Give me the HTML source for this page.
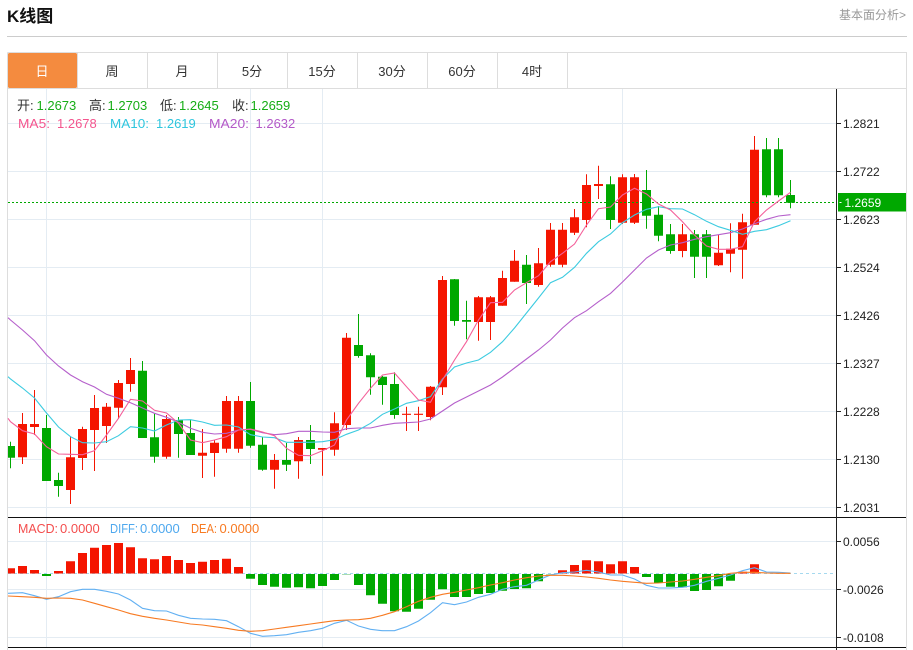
<!DOCTYPE html>
<html lang="zh">
<head>
<meta charset="utf-8">
<title>K线图</title>
<style>
html,body{margin:0;padding:0;background:#fff;width:913px;height:650px;overflow:hidden}
svg{display:block;position:absolute;left:0;top:0}
text{font-family:"Liberation Sans","Noto Sans CJK SC",sans-serif}
.tab{font-size:13px;fill:#333;text-anchor:middle}
.ax{font-size:12px;fill:#222}
.lg{font-size:13px}
</style>
</head>
<body>
<svg width="913" height="650" viewBox="0 0 913 650" xmlns="http://www.w3.org/2000/svg">
<!-- header -->
<text x="7" y="22" font-size="17" font-weight="700" fill="#111">K线图</text>
<text x="839" y="19" font-size="12" fill="#999">基本面分析&gt;</text>
<path d="M7 36.5H907" stroke="#ccc" fill="none"/>
<!-- frame -->
<path d="M7.5 52.5H906.5V650M7.5 52.5V650M7.5 88.5H906.5" stroke="#ddd" fill="none"/>
<!-- tabs -->
<rect x="8" y="53" width="69" height="35" rx="1.5" fill="#f48b3f"/>
<path d="M77.5 53V88M147.5 53V88M217.5 53V88M287.5 53V88M357.5 53V88M427.5 53V88M497.5 53V88M567.5 53V88" stroke="#ddd" fill="none"/>
<text class="tab" x="42" y="76" style="fill:#fff">日</text>
<text class="tab" x="112" y="76">周</text>
<text class="tab" x="182" y="76">月</text>
<text class="tab" x="252" y="76">5分</text>
<text class="tab" x="322" y="76">15分</text>
<text class="tab" x="392" y="76">30分</text>
<text class="tab" x="462" y="76">60分</text>
<text class="tab" x="532" y="76">4时</text>
<!-- grid -->
<path d="M8 123.5H836M8 171.5H836M8 219.5H836M8 267.5H836M8 315.5H836M8 363.5H836M8 411.5H836M8 459.5H836M8 507.5H836M8 541.5H836M8 589.5H836M8 637.5H836M46.5 89V647M250.5 89V647M322.5 89V647M622.5 89V647" stroke="#e4ecf3" fill="none"/>
<!-- green candles -->
<path fill="none" stroke="#00a800" d="M10.5 441.7V468.3M46.5 415V481M58.5 472.7V496.7M142.5 361V438M154.5 413V462.7M178.5 417V457.7M190.5 420V455M250.5 382V447.7M262.5 436.7V470.7M286.5 443V471M310.5 425V464M358.5 314V357.7M370.5 353.3V394.7M382.5 376V404.7M394.5 372.3V418.7M454.5 279V325.7M466.5 300.7V339.3M526.5 255V304M610.5 176.3V229M646.5 170V228.7M658.5 206V241.3M670.5 224V253.7M694.5 230V278M706.5 230V278M766.5 138V197.3M778.5 138V197.3M790.5 180V208.3"/>
<path fill="#00a800" d="M8 446h7V457.7h-7zM42 428h9V481h-9zM54 480h9V486h-9zM138 370.7h9V438h-9zM150 437.3h9V456.7h-9zM174 420h9V434h-9zM186 433h9V455h-9zM246 401h9V445.7h-9zM258 444.7h9V469.7h-9zM282 460h9V464.7h-9zM306 440h9V449h-9zM354 345h9V356h-9zM366 355.3h9V377.3h-9zM378 376.7h9V385h-9zM390 384h9V415h-9zM450 279.3h9V321h-9zM462 320h9V321.7h-9zM522 264.7h9V283h-9zM606 184.3h9V220h-9zM642 190h9V215.7h-9zM654 214.7h9V235.7h-9zM666 234.3h9V251h-9zM690 234.3h9V256.7h-9zM702 234.3h9V256.7h-9zM762 149.3h9V195.3h-9zM774 149.3h9V195.3h-9zM786 195h9V202.7h-9z"/>
<!-- red candles -->
<path fill="none" stroke="#f41500" d="M22.5 413V464M34.5 390V435M70.5 436V504M82.5 426.7V470M94.5 395V471M106.5 403V443M118.5 380V419M130.5 358V391.7M166.5 415V458.7M202.5 429V478M214.5 440V476.7M226.5 396V452.7M238.5 396V452.7M274.5 454V488.7M298.5 437V478.7M322.5 448V475.7M334.5 412.3V455.7M346.5 333V430M406.5 406.7V431M418.5 406.7V431M430.5 386V420.3M442.5 276V395M478.5 296V340.7M490.5 296V340M502.5 270.7V305.7M514.5 250V281.7M538.5 248V286.7M550.5 223V266.7M562.5 223V267.3M574.5 209V235M586.5 174.3V227.3M598.5 165.7V199M622.5 174.3V224M634.5 174V224M682.5 224V257.3M718.5 235V266M730.5 223.3V272.3M742.5 213.7V278.7M754.5 136V224.7"/>
<path fill="#f41500" d="M18 424h9V457.3h-9zM30 424h9V427h-9zM66 457.3h9V490h-9zM78 429h9V458h-9zM90 408h9V430h-9zM102 406.7h9V426h-9zM114 383h9V407.7h-9zM126 370h9V384h-9zM162 419h9V456.7h-9zM198 452.7h9V455.7h-9zM210 442.7h9V453h-9zM222 401h9V448.7h-9zM234 401h9V448.7h-9zM270 460h9V469.7h-9zM294 440h9V461.3h-9zM318 448h9V449.7h-9zM330 423.3h9V449.7h-9zM342 337.7h9V425h-9zM402 413.7h9V414.9h-9zM414 413.7h9V414.9h-9zM426 386.7h9V417h-9zM438 280h9V387.3h-9zM474 297.3h9V322h-9zM486 297.3h9V322h-9zM498 278h9V305.7h-9zM510 260.7h9V281.7h-9zM534 263.3h9V285h-9zM546 229.7h9V264.7h-9zM558 229.7h9V264.7h-9zM570 217.3h9V232.7h-9zM582 185h9V220h-9zM594 184h9V186h-9zM618 177.3h9V222.7h-9zM630 177.3h9V222.7h-9zM678 234.3h9V251h-9zM714 252.7h9V265.3h-9zM726 248.7h9V253.7h-9zM738 222.3h9V249.7h-9zM750 149.7h9V224.7h-9z"/>
<!-- price line -->
<path d="M8 202.5H836" stroke="#00a800" stroke-dasharray="2 2" fill="none"/>
<!-- MA20 -->
<polyline fill="none" stroke="#b55fcb" stroke-width="1.1" points="8,317.7 10.5,320 22.5,330 34.5,340.7 46.5,355 58.5,366 70.5,375 82.5,381.7 94.5,387 106.5,394.3 118.5,398.3 130.5,402.7 142.5,408 154.5,413.3 166.5,417.3 178.5,422.3 190.5,428.3 202.5,432.3 214.5,434 226.5,433.3 238.5,430 250.5,429.3 262.5,432.7 274.5,434.7 286.5,433.7 298.5,431.3 310.5,431.3 322.5,432 334.5,432.3 346.5,428.7 358.5,428 370.5,428 382.5,425.3 394.5,423.3 406.5,422.7 418.5,422 430.5,419 442.5,411 454.5,403 466.5,397 478.5,391 490.5,385 502.5,377 514.5,368 526.5,359 538.5,350 550.5,340 562.5,328 574.5,317.7 586.5,310.7 598.5,301.7 610.5,293.4 622.5,282 634.5,270 646.5,258 658.5,250 670.5,245 682.5,242.7 694.5,239.3 706.5,236.7 718.5,234.7 730.5,232.7 742.5,229 754.5,223.7 766.5,219.3 778.5,216 790.5,214.7"/>
<!-- MA10 -->
<polyline fill="none" stroke="#3ccbe0" stroke-width="1.1" points="8,376.7 10.5,379 22.5,388 34.5,398 46.5,413 58.5,427 70.5,436.7 82.5,442.7 94.5,443 106.5,441.7 118.5,435.7 130.5,426.7 142.5,428 154.5,431 166.5,425 178.5,420 190.5,419.7 202.5,422 214.5,425.3 226.5,425 238.5,427 250.5,434.7 262.5,437 274.5,437.7 286.5,442.3 298.5,442.3 310.5,442.3 322.5,441.7 334.5,439.7 346.5,434.3 358.5,430 370.5,423.3 382.5,414.3 394.5,409 406.5,403.3 418.5,400.7 430.5,396.7 442.5,379 454.5,367 466.5,363 478.5,360 490.5,352.3 502.5,341.7 514.5,328 526.5,313 538.5,298 550.5,282.7 562.5,277.3 574.5,267.3 586.5,253.3 598.5,241.7 610.5,234 622.5,222.7 634.5,215 646.5,209.3 658.5,206.7 670.5,208.7 682.5,209 694.5,214.7 706.5,221.3 718.5,226.7 730.5,230.3 742.5,234.3 754.5,231.3 766.5,229.7 778.5,225.7 790.5,220.7"/>
<!-- MA5 -->
<polyline fill="none" stroke="#f4609a" stroke-width="1.1" points="8,418.3 10.5,421.7 22.5,430.7 34.5,434 46.5,446.7 58.5,454 70.5,454.3 82.5,454.7 94.5,450.7 106.5,435 118.5,418.3 130.5,399.3 142.5,401 154.5,410.3 166.5,413 178.5,423.3 190.5,440 202.5,442.7 214.5,440 226.5,436.7 238.5,430 250.5,429 262.5,432 274.5,435.7 286.5,448.3 298.5,455.3 310.5,455.7 322.5,450.7 334.5,445 346.5,420 358.5,403.3 370.5,388.3 382.5,375 394.5,373 406.5,386.7 418.5,400 430.5,402.3 442.5,380 454.5,360 466.5,341.7 478.5,320 490.5,302.7 502.5,302.3 514.5,290 526.5,282.7 538.5,275.7 550.5,261.7 562.5,253.3 574.5,244 586.5,225 598.5,208.7 610.5,207 622.5,195 634.5,188.3 646.5,194 658.5,204 670.5,210 682.5,221.7 694.5,235 706.5,246 718.5,249.3 730.5,249.3 742.5,246.7 754.5,221.7 766.5,210 778.5,201 790.5,192.3"/>
<!-- MACD zero -->
<path d="M8 573.5H833" stroke="#a5d9ef" stroke-dasharray="3 3" fill="none"/>
<!-- MACD bars -->
<path fill="#f41500" d="M8 568.3h7V573.5h-7zM18 566h9V573.5h-9zM30 570h9V573.5h-9zM54 571h9V573.5h-9zM66 561.3h9V573.5h-9zM78 553h9V573.5h-9zM90 547.7h9V573.5h-9zM102 545h9V573.5h-9zM114 543h9V573.5h-9zM126 547.3h9V573.5h-9zM138 558.3h9V573.5h-9zM150 559.3h9V573.5h-9zM162 556h9V573.5h-9zM174 560h9V573.5h-9zM186 563h9V573.5h-9zM198 561.7h9V573.5h-9zM210 560h9V573.5h-9zM222 558.7h9V573.5h-9zM234 567h9V573.5h-9zM558 570.3h9V573.5h-9zM570 565h9V573.5h-9zM582 560.3h9V573.5h-9zM594 561.3h9V573.5h-9zM606 564.3h9V573.5h-9zM618 561.3h9V573.5h-9zM630 567h9V573.5h-9zM738 571.7h9V573.5h-9zM750 564.3h9V573.5h-9z"/>
<path fill="#00a800" d="M42 574h9V576h-9zM246 574h9V578.7h-9zM258 574h9V585h-9zM270 574h9V586.7h-9zM282 574h9V587.7h-9zM294 574h9V587.3h-9zM306 574h9V588.3h-9zM318 574h9V586h-9zM330 574h9V580h-9zM354 574h9V585h-9zM366 574h9V595.3h-9zM378 574h9V603.7h-9zM390 574h9V611.3h-9zM402 574h9V611.7h-9zM414 574h9V608.7h-9zM426 574h9V599.7h-9zM438 574h9V589.3h-9zM450 574h9V597h-9zM462 574h9V597h-9zM474 574h9V594h-9zM486 574h9V593h-9zM498 574h9V590.7h-9zM510 574h9V589h-9zM522 574h9V588.3h-9zM534 574h9V581.3h-9zM642 574h9V577h-9zM654 574h9V583h-9zM666 574h9V586.7h-9zM678 574h9V587.3h-9zM690 574h9V591h-9zM702 574h9V590h-9zM714 574h9V586.3h-9zM726 574h9V580.7h-9z"/>
<path fill="#a8dcb0" d="M342 574h9V575h-9zM546 574h9V575h-9z"/>
<!-- DIFF -->
<polyline fill="none" stroke="#62b0f2" stroke-width="1.1" points="8,593.3 22.5,592.7 34.5,595.7 46.5,599.3 58.5,596.7 70.5,591.7 82.5,589.3 94.5,589.3 106.5,591.3 118.5,594 130.5,600 142.5,608.3 154.5,610.7 166.5,611 178.5,615.3 190.5,618.3 202.5,619 214.5,619.3 226.5,620.7 238.5,626.7 250.5,633.3 262.5,636.3 274.5,635.7 286.5,634.7 298.5,632.3 310.5,630.7 322.5,628.3 334.5,623.3 346.5,620.3 358.5,626 370.5,629.3 382.5,630.7 394.5,630.7 406.5,626.7 418.5,621 430.5,612.7 442.5,602.7 454.5,604.7 466.5,602 478.5,597.3 490.5,594.3 502.5,589.3 514.5,586.7 526.5,585.3 538.5,580 550.5,575 562.5,572.7 574.5,572 586.5,570.3 598.5,572 610.5,575 622.5,575 634.5,579 646.5,585.3 658.5,588 670.5,588 682.5,587.3 694.5,585.3 706.5,581.3 718.5,578.3 730.5,575 742.5,570.7 754.5,567.7 766.5,572 778.5,572.3 790.5,573"/>
<!-- DEA -->
<polyline fill="none" stroke="#f77a22" stroke-width="1.1" points="8,596 22.5,596.7 34.5,597.3 46.5,598.3 58.5,598 70.5,598.3 82.5,600 94.5,603.3 106.5,606.7 118.5,610 130.5,613.7 142.5,616.3 154.5,618.3 166.5,620 178.5,622 190.5,624 202.5,625 214.5,626.7 226.5,628.3 238.5,630.3 250.5,631.3 262.5,630.7 274.5,629 286.5,627.3 298.5,625.7 310.5,624 322.5,622.3 334.5,620.7 346.5,620 358.5,619.7 370.5,618.3 382.5,615.3 394.5,611.7 406.5,606.7 418.5,601.3 430.5,597.3 442.5,594.3 454.5,592.3 466.5,590 478.5,587.7 490.5,585 502.5,582.7 514.5,580 526.5,577.7 538.5,576 550.5,575.3 562.5,575.3 574.5,576 586.5,577 598.5,578.3 610.5,580 622.5,581.3 634.5,582.3 646.5,583.3 658.5,583 670.5,582 682.5,581 694.5,579.3 706.5,577.3 718.5,575.7 730.5,573.3 742.5,572.3 754.5,572.3 766.5,573 778.5,573.3 790.5,573.3"/>
<!-- axes -->
<path d="M8 517.5H906M8 647.5H906" stroke="#111" fill="none"/>
<path d="M836.5 89V650M836 123.5H841M836 171.5H841M836 219.5H841M836 267.5H841M836 315.5H841M836 363.5H841M836 411.5H841M836 459.5H841M836 507.5H841M836 541.5H841M836 589.5H841M836 637.5H841" stroke="#222" fill="none"/>
<text class="ax" x="843" y="128">1.2821</text>
<text class="ax" x="843" y="176">1.2722</text>
<text class="ax" x="843" y="224">1.2623</text>
<text class="ax" x="843" y="272">1.2524</text>
<text class="ax" x="843" y="320">1.2426</text>
<text class="ax" x="843" y="368">1.2327</text>
<text class="ax" x="843" y="416">1.2228</text>
<text class="ax" x="843" y="464">1.2130</text>
<text class="ax" x="843" y="512">1.2031</text>
<text class="ax" x="843" y="546">0.0056</text>
<text class="ax" x="843" y="594">-0.0026</text>
<text class="ax" x="843" y="642">-0.0108</text>
<!-- current price -->
<rect x="838" y="193" width="68" height="18.5" fill="#00a800"/>
<path d="M839.5 202.5H841.5" stroke="#fff" fill="none"/>
<text x="844.5" y="207" font-size="12" fill="#fff">1.2659</text>
<!-- legends -->
<text class="lg" x="17" y="110" fill="#333">开:</text><text class="lg" x="36.5" y="110" fill="#16ad16">1.2673</text>
<text class="lg" x="89" y="110" fill="#333">高:</text><text class="lg" x="107.5" y="110" fill="#16ad16">1.2703</text>
<text class="lg" x="160" y="110" fill="#333">低:</text><text class="lg" x="179" y="110" fill="#16ad16">1.2645</text>
<text class="lg" x="232" y="110" fill="#333">收:</text><text class="lg" x="250.5" y="110" fill="#16ad16">1.2659</text>
<text class="lg" x="18" y="128" fill="#f4558e" textLength="32" lengthAdjust="spacingAndGlyphs">MA5:</text><text class="lg" x="57" y="128" fill="#f4558e">1.2678</text>
<text class="lg" x="110" y="128" fill="#2fc6de" textLength="39" lengthAdjust="spacingAndGlyphs">MA10:</text><text class="lg" x="156" y="128" fill="#2fc6de">1.2619</text>
<text class="lg" x="209" y="128" fill="#b45ac8" textLength="40" lengthAdjust="spacingAndGlyphs">MA20:</text><text class="lg" x="255.5" y="128" fill="#b45ac8">1.2632</text>
<text class="lg" x="18" y="533" fill="#f44d4d" textLength="40" lengthAdjust="spacingAndGlyphs">MACD:</text><text class="lg" x="60" y="533" fill="#f44d4d">0.0000</text>
<text class="lg" x="110" y="533" fill="#4ea8ee" textLength="28" lengthAdjust="spacingAndGlyphs">DIFF:</text><text class="lg" x="140" y="533" fill="#4ea8ee">0.0000</text>
<text class="lg" x="191" y="533" fill="#f77a22" textLength="26" lengthAdjust="spacingAndGlyphs">DEA:</text><text class="lg" x="219.5" y="533" fill="#f77a22">0.0000</text>
</svg>
</body>
</html>
